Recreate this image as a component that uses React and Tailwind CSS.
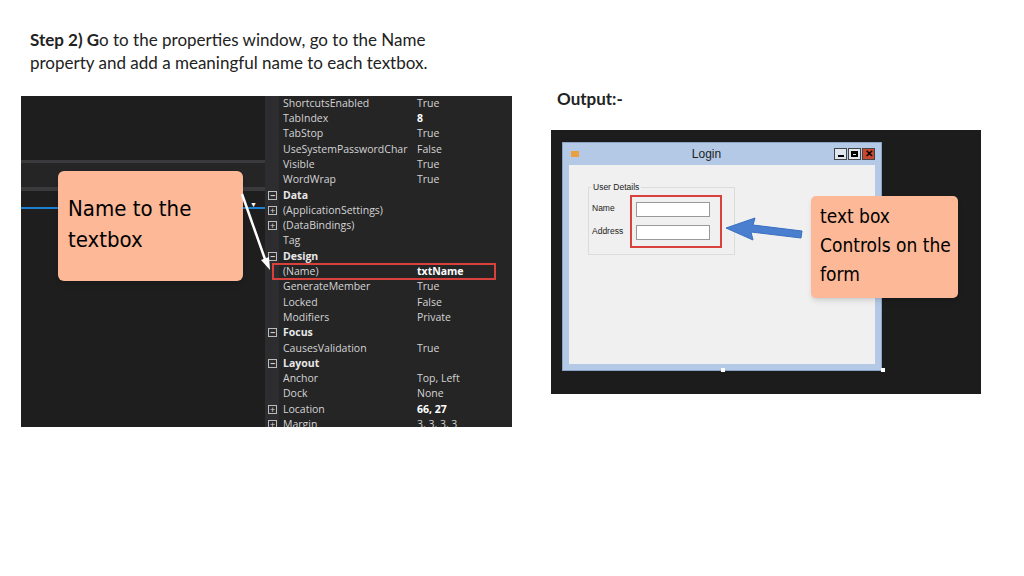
const rows = [
  ["", "ShortcutsEnabled", "True"],
  ["", "TabIndex", "8", "bv"],
  ["", "TabStop", "True"],
  ["", "UseSystemPasswordChar", "False"],
  ["", "Visible", "True"],
  ["", "WordWrap", "True"],
  ["-", "Data", "", "h"],
  ["+", "(ApplicationSettings)", ""],
  ["+", "(DataBindings)", ""],
  ["", "Tag", ""],
  ["-", "Design", "", "h"],
  ["", "(Name)", "txtName", "sel"],
  ["", "GenerateMember", "True"],
  ["", "Locked", "False"],
  ["", "Modifiers", "Private"],
  ["-", "Focus", "", "h"],
  ["", "CausesValidation", "True"],
  ["-", "Layout", "", "h"],
  ["", "Anchor", "Top, Left"],
  ["", "Dock", "None"],
  ["+", "Location", "66, 27", "bv"],
  ["+", "Margin", "3, 3, 3, 3"],
];
const hand = { fontFamily: '"DejaVu Sans Condensed", "Liberation Sans Narrow", sans-serif' };

export default function App() {
  return (
    <div className="w-[1024px] h-[576px] bg-white relative overflow-hidden" style={{ fontFamily: 'Lato,"Open Sans","Noto Sans",sans-serif' }}>
      <div className="pl-[30px] pt-[28px] text-[17px] leading-[23px] text-[#222]">
        <div><b>Step 2) G</b>o to the properties window, go to the Name</div>
        <div>property and add a meaningful name to each textbox.</div>
      </div>
      <div className="absolute left-[557px] top-[86px] font-bold text-[17px] text-[#222]">Output:-</div>

      {/* left screenshot */}
      <div className="absolute left-[21px] top-[96px] w-[491px] h-[331px] bg-[#1e1e1e] flex overflow-hidden" style={{ fontFamily: '"Open Sans","Noto Sans",sans-serif' }}>
        <div className="w-[244px] relative">
          <div className="absolute left-0 right-0 top-[64px] h-[3px] bg-[#3a3a3c]" />
          <div className="absolute left-0 right-0 top-[67px] h-[28px] bg-[#252526]" />
          <div className="absolute left-0 right-0 top-[91px] h-[4px] bg-[#3a3a3c]" />
          <div className="absolute left-0 w-[40px] top-[111px] h-[2px] bg-[#1c7fd1]" />
          <div className="absolute left-[200px] w-[44px] top-[111px] h-[2px] bg-[#1c7fd1]" />
          <div className="absolute left-[229px] top-[104px] text-white text-[7px]">▼</div>
        </div>
        <div className="flex-1 bg-[#252526] flex">
          <div className="w-[14px] bg-[#2d2d30]" />
          <div className="flex-1">
            {rows.map((r, i) => (
              <div key={i} className={`h-[15.3px] flex items-center text-[10.5px] relative ${r[3] === "h" ? "font-bold text-[#e8e8e8]" : "text-[#d4d4d4]"}`}>
                {r[0] && <span className="absolute -left-[11px] top-[3px] w-[9px] h-[9px] border border-[#bbb] flex items-center justify-center text-[9px] leading-none text-[#ddd]">{r[0] === "+" ? "+" : "−"}</span>}
                <span className="pl-[4px] w-[138px]">{r[1]}</span>
                <span className={r[3] === "bv" || r[3] === "sel" ? "font-bold text-white" : ""}>{r[2]}</span>
                {r[3] === "sel" && <div className="absolute -left-[7px] top-[-1px] w-[224px] h-[17px] border-2 border-[#d9423c]" />}
              </div>
            ))}
          </div>
        </div>
      </div>
      <div className="absolute left-[58px] top-[171px] w-[185px] h-[110px] bg-[#fcb897] rounded-[6px] shadow-md px-[10px] pt-[22px] text-[22px] leading-[31px] text-black" style={hand}>
        Name to the<br />textbox
      </div>
      <svg className="absolute left-[236px] top-[190px]" width="40" height="90">
        <line x1="6" y1="4" x2="30" y2="72" stroke="white" strokeWidth="2.5" />
        <polygon points="34,80 25,70 33,67" fill="white" />
      </svg>

      {/* right screenshot */}
      <div className="absolute left-[551px] top-[130px] w-[430px] h-[264px] bg-[#1c1c1c]">
        <div className="absolute left-[11px] top-[12px] w-[320px] h-[229px] bg-[#b4c9e6] border border-[#8aa4c8] flex flex-col px-[6px] pb-[6px]" style={{ fontFamily: '"Liberation Sans",Arial,sans-serif' }}>
          <div className="h-[22px] flex items-center">
            <div className="w-[8px] h-[6px] bg-[#e8a040] ml-[2px]" />
            <div className="flex-1 text-center text-[12px] text-[#222]">Login</div>
            <div className="flex gap-[1px]">
              <div className="w-[13px] h-[12px] bg-[#dfe6f0] border border-[#444] flex items-end justify-center pb-[2px]"><div className="w-[6px] h-[2px] bg-black" /></div>
              <div className="w-[13px] h-[12px] bg-[#dfe6f0] border border-[#444] flex items-center justify-center"><div className="w-[7px] h-[6px] border-2 border-black border-t-[3px]" /></div>
              <div className="w-[13px] h-[12px] bg-[#c9482f] border border-[#444] text-[10px] font-bold leading-[10px] text-center text-black">✕</div>
            </div>
          </div>
          <div className="flex-1 bg-[#f0f0f0] relative text-[8.5px] text-[#222]">
            <div className="absolute left-[19px] top-[22px] w-[147px] h-[68px] border border-[#dcdcdc]" />
            <div className="absolute left-[22px] top-[16px] bg-[#f0f0f0] px-[2px]">User Details</div>
            <div className="absolute left-[23px] top-[37px]">Name</div>
            <div className="absolute left-[23px] top-[60px]">Address</div>
            <div className="absolute left-[61px] top-[30px] w-[92px] h-[53px] border-2 border-[#d9423c]" />
            <div className="absolute left-[67px] top-[37px] w-[74px] h-[15px] bg-white border border-[#999]" />
            <div className="absolute left-[67px] top-[60px] w-[74px] h-[15px] bg-white border border-[#999]" />
          </div>
        </div>
        <div className="absolute left-[170px] top-[238px] w-[4px] h-[4px] bg-white" />
        <div className="absolute left-[330px] top-[238px] w-[4px] h-[4px] bg-white" />
        <svg className="absolute left-[172px] top-[86px]" width="82" height="32">
          <path d="M78 22 L28 16 L30 24 L3 12 L32 2 L30 9 L79 15 Z" fill="#4a7fd0" stroke="#3a6fc0" strokeWidth="1" strokeLinejoin="round" />
        </svg>
        <div className="absolute left-[260px] top-[66px] w-[147px] h-[102px] bg-[#fcb897] rounded-[5px] shadow-md pl-[9px] pt-[6px] text-[19px] leading-[29px] text-black" style={hand}>
          text box<br />Controls on the<br />form
        </div>
      </div>
    </div>
  );
}
